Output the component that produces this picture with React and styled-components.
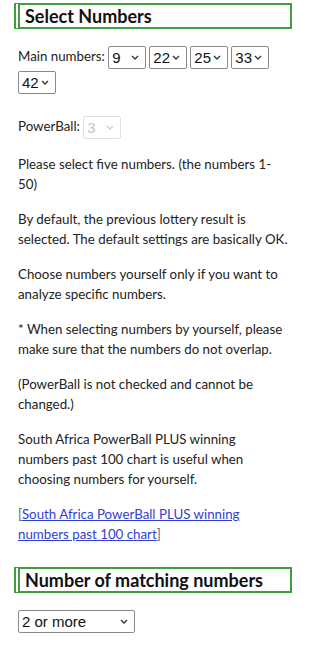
import styled, { createGlobalStyle } from 'styled-components'

const GlobalStyle = createGlobalStyle`
    html, body {
        margin: 0;
        padding: 0;
        background: #fff;
    }
    body {
        font-family: Lato, "Noto Sans", sans-serif;
        color: #222;
    }
`

const chevron = color => `url("data:image/svg+xml,%3Csvg xmlns='http://www.w3.org/2000/svg' width='8' height='5' viewBox='0 0 8 5'%3E%3Cpath d='M1 1l3 3 3-3' fill='none' stroke='${color}' stroke-width='1.3'/%3E%3C/svg%3E")`

const Page = styled.div`
    width: 300px;
    box-sizing: border-box;
    padding: 3px 8px 20px 14px;
`

const Heading = styled.h2`
    margin: ${props => props.$first ? '0' : '23px'} 0 ${props => props.$first ? '15px' : '14px'};
    padding: 0 0 0 5px;
    height: 26px;
    box-sizing: border-box;
    border: 2px solid #3f9f3f;
    border-left: 6px double #3f9f3f;
    font-size: 18px;
    line-height: 22px;
    font-weight: 700;
    color: #111;
`

const Para = styled.p`
    margin: 15px 0 0;
    padding: 0 4px;
    font-size: 13.3px;
    line-height: 20px;
`

const SelectRow = styled.div`
    margin-top: ${props => props.$gap || '0'};
    padding-left: 4px;
    font-size: 13.3px;
    line-height: 24px;
`

const NumSelect = styled.select`
    appearance: none;
    box-sizing: border-box;
    font-family: "Liberation Sans", Arial, sans-serif;
    font-size: 15px;
    height: 23px;
    width: ${props => props.$w || '38px'};
    margin: 0 3px 0 0;
    padding: 0 0 0 3px;
    vertical-align: middle;
    color: #111;
    background: #fff ${chevron('%23333')} no-repeat right 6px center;
    border: 1px solid #8a8a8a;
    border-radius: 2px;
    &:disabled {
        color: #aaa;
        border-color: #d4d4d4;
        background-image: ${chevron('%23bbb')};
    }
`

const Bracket = styled.span`
    color: #666;
`

const Link = styled.a`
    color: #2f3fd8;
    text-decoration: underline;
`

const range = n => Array.from({ length: n }, (_, i) => i + 1)

const App = function App() {
    const picks = [9, 22, 25, 33, 42]
    return <>
        <GlobalStyle />
        <Page>
            <Heading $first>Select Numbers</Heading>
            <SelectRow>
                Main numbers:{' '}
                {picks.map((v, i) => (
                    <NumSelect key={i} defaultValue={v}>
                        {range(50).map(n => <option key={n} value={n}>{n}</option>)}
                    </NumSelect>
                ))}
            </SelectRow>
            <SelectRow $gap="20px">
                PowerBall:{' '}
                <NumSelect defaultValue={3} disabled>
                    {range(20).map(n => <option key={n} value={n}>{n}</option>)}
                </NumSelect>
            </SelectRow>
            <Para>Please select five numbers. (the numbers 1-50)</Para>
            <Para>By default, the previous lottery result is selected. The default settings are basically OK.</Para>
            <Para>Choose numbers yourself only if you want to analyze specific numbers.</Para>
            <Para>* When selecting numbers by yourself, please make sure that the numbers do not overlap.</Para>
            <Para>(PowerBall is not checked and cannot be changed.)</Para>
            <Para>South Africa PowerBall PLUS winning numbers past 100 chart is useful when choosing numbers for yourself.</Para>
            <Para>
                <Bracket>[</Bracket>
                <Link href="#chart">South Africa PowerBall PLUS winning numbers past 100 chart</Link>
                <Bracket>]</Bracket>
            </Para>
            <Heading>Number of matching numbers</Heading>
            <SelectRow>
                <NumSelect $w="117px" defaultValue="2">
                    <option value="1">1 or more</option>
                    <option value="2">2 or more</option>
                    <option value="3">3 or more</option>
                    <option value="4">4 or more</option>
                    <option value="5">5 or more</option>
                </NumSelect>
            </SelectRow>
        </Page>
    </>
}
export default App
